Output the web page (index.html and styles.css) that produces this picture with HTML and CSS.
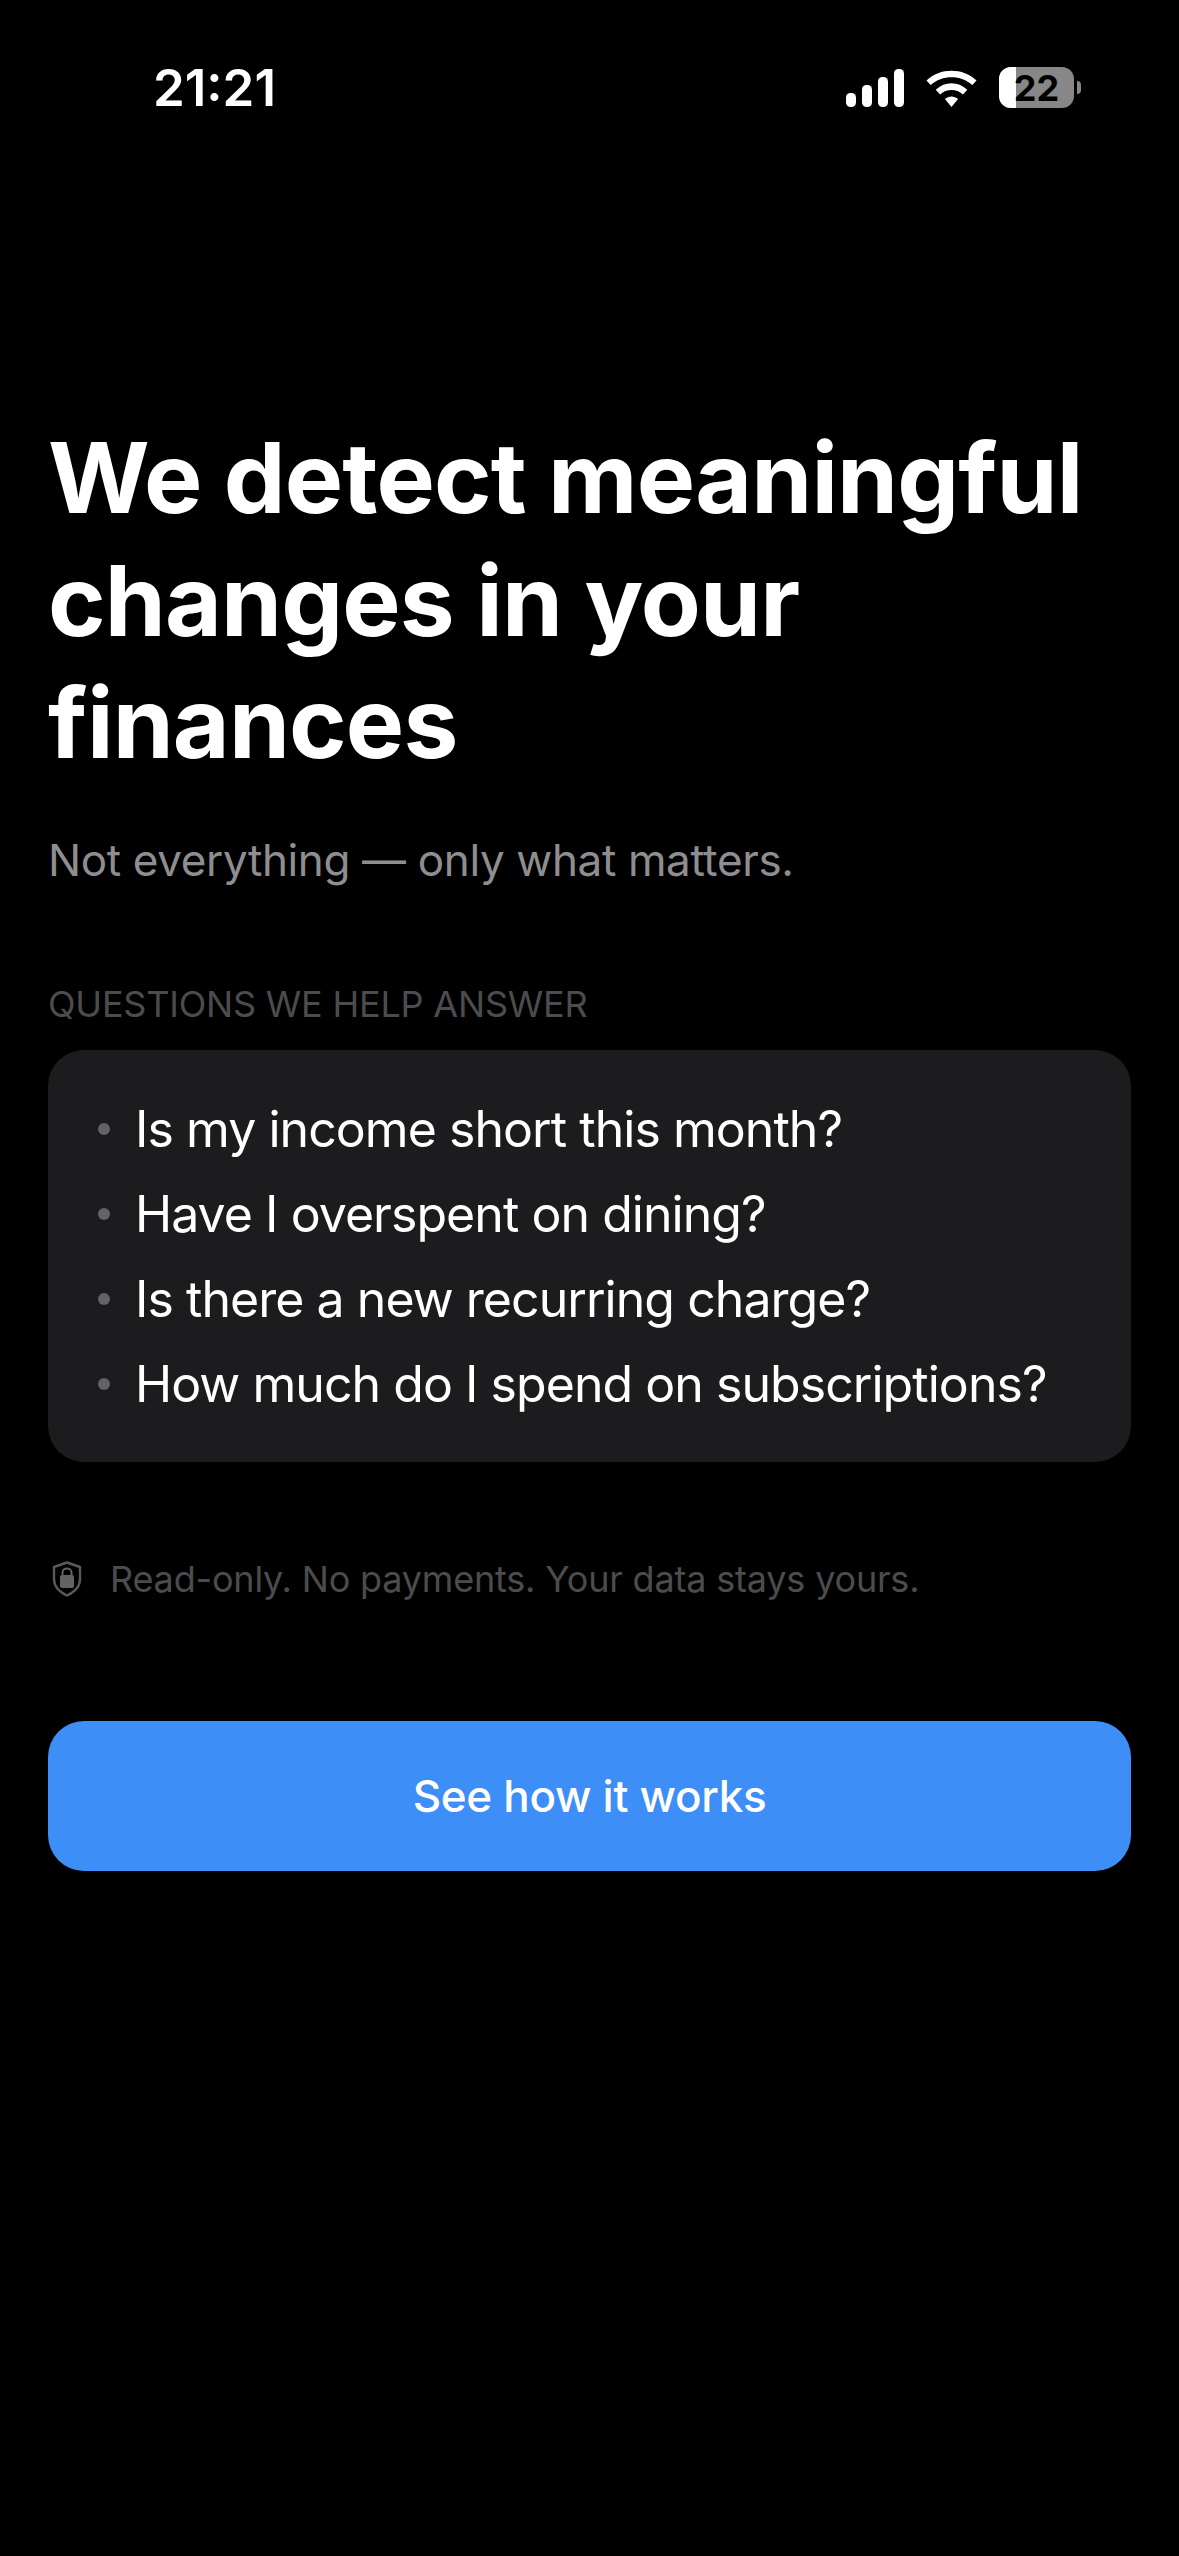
FILE: index.html
```html
<!DOCTYPE html>
<html lang="en">
<head>
    <meta charset="UTF-8">
    <meta name="viewport" content="width=device-width, initial-scale=1.0">
    <title>How it works</title>
    <link rel="stylesheet" href="styles.css">
</head>
<body>
    <div class="status-bar">
        <span class="time">21:21</span>
        <div class="status-icons">
            <svg class="signal" width="58" height="38" viewBox="0 0 58 38">
                <rect x="0" y="24" width="10" height="14" rx="4.5" fill="#fff"/>
                <rect x="16" y="16" width="10" height="22" rx="4.5" fill="#fff"/>
                <rect x="32" y="8" width="10" height="30" rx="4.5" fill="#fff"/>
                <rect x="48" y="0" width="10" height="38" rx="4.5" fill="#fff"/>
            </svg>
            <svg class="wifi" width="51" height="38" viewBox="0.5 0 51 38">
                <path d="M1 11.5C14.5 -1.5 37.5 -1.5 51 11.5L46.8 16C35.5 5.5 16.5 5.5 5.2 16Z" fill="#fff"/>
                <path d="M10.2 20.8C19.5 12.2 32.5 12.2 41.8 20.8L37.4 25.4C31 19.6 21 19.6 14.6 25.4Z" fill="#fff"/>
                <path d="M19.4 30C23.2 26.6 28.8 26.6 32.6 30L26 38Z" fill="#fff"/>
            </svg>
            <div class="battery">
                <div class="battery-body">
                    <div class="battery-fill"></div>
                    <span class="battery-level">22</span>
                </div>
                <div class="battery-cap"></div>
            </div>
        </div>
    </div>

    <div class="content">
        <h1>We detect meaningful changes in your finances</h1>
        <p class="subtitle">Not everything — only what matters.</p>

        <div class="section-label">QUESTIONS WE HELP ANSWER</div>
        <ul class="questions">
            <li>Is my income short this month?</li>
            <li>Have I overspent on dining?</li>
            <li>Is there a new recurring charge?</li>
            <li>How much do I spend on subscriptions?</li>
        </ul>

        <div class="privacy">
            <svg width="30" height="36" viewBox="0 0 30 36">
                <path d="M15 1.5L28 6V18C28 25.5 22.5 31 15 34.5C7.5 31 2 25.5 2 18V6Z" fill="none" stroke="#5a5a5e" stroke-width="2.4" stroke-linejoin="round"/>
                <rect x="8" y="14" width="14" height="13" rx="2" fill="#636366"/>
                <path d="M10.5 15V11.5C10.5 6 19.5 6 19.5 11.5V15" fill="none" stroke="#636366" stroke-width="2"/>
            </svg>
            <span>Read-only. No payments. Your data stays yours.</span>
        </div>

        <button class="cta">See how it works</button>
    </div>
</body>
</html>
```

FILE: styles.css
```css
* {
    box-sizing: border-box;
}
body {
    font-family: Inter, "Noto Sans", sans-serif;
    background-color: #000;
    color: #fff;
    margin: 0;
    padding: 0;
    width: 1179px;
    height: 2556px;
    overflow: hidden;
}
.status-bar {
    height: 176px;
    padding: 57px 0 0 153px;
    display: flex;
    justify-content: space-between;
    align-items: flex-start;
}
.time {
    font-size: 51px;
    font-weight: 600;
    line-height: 62px;
}
.status-icons {
    display: flex;
    align-items: center;
    gap: 22px;
    padding: 10px 98px 0 0;
}
.battery {
    display: flex;
    align-items: center;
    gap: 3px;
}
.battery-body {
    position: relative;
    width: 75px;
    height: 41px;
    border-radius: 12px;
    background: #878787;
    overflow: hidden;
    display: flex;
    align-items: center;
    justify-content: center;
}
.battery-fill {
    position: absolute;
    left: 0;
    top: 0;
    bottom: 0;
    width: 17px;
    background: #fff;
}
.battery-level {
    position: relative;
    font-size: 36px;
    font-weight: 700;
    color: #000;
}
.battery-cap {
    width: 4px;
    height: 13px;
    background: #878787;
    border-radius: 0 6px 6px 0;
}
.content {
    padding: 0 48px;
}
h1 {
    font-size: 98px;
    font-weight: 700;
    line-height: 122.5px;
    letter-spacing: -0.85px;
    margin: 0;
    padding-top: 241px;
}
.subtitle {
    font-size: 44px;
    line-height: 52px;
    letter-spacing: -0.37px;
    color: #8e8e90;
    margin: 49.5px 0 0;
}
.section-label {
    font-size: 36px;
    line-height: 42px;
    letter-spacing: -0.2px;
    color: #4c4c4e;
    margin-top: 97px;
}
.questions {
    list-style: none;
    margin: 25px 0 0;
    padding: 36px 48px 36px 50px;
    background: #1c1c1e;
    border-radius: 36px;
}
.questions li {
    display: flex;
    align-items: center;
    gap: 25px;
    height: 85px;
    font-size: 50px;
    letter-spacing: -0.95px;
}
.questions li::before {
    content: "";
    width: 12px;
    height: 12px;
    border-radius: 50%;
    background: #636366;
}
.privacy {
    display: flex;
    align-items: center;
    gap: 28px;
    margin-top: 95px;
    padding-left: 4px;
    font-size: 36px;
    line-height: 44px;
    letter-spacing: -0.18px;
    color: #4c4c4e;
}
.cta {
    display: block;
    width: 100%;
    height: 150px;
    margin-top: 120px;
    border: none;
    border-radius: 36px;
    background-color: #3e8ef7;
    color: #fff;
    font-family: inherit;
    font-size: 44px;
    font-weight: 500;
    letter-spacing: -0.3px;
}
```
